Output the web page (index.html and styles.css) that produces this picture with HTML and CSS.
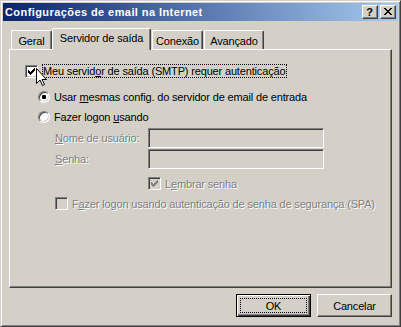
FILE: index.html
```html
<!DOCTYPE html>
<html>
<head>
<meta charset="utf-8">
<link rel="stylesheet" href="styles.css">
</head>
<body>
<div class="window">
  <div class="titlebar">
    <span class="title">Configurações de email na Internet</span>
    <div class="tbtns">
      <div class="tbtn help">?</div>
      <div class="tbtn close">
        <svg width="8" height="7" viewBox="0 0 8 7" shape-rendering="crispEdges"><path d="M0 0h2v1h-2zM6 0h2v1h-2zM1 1h2v1h-2zM5 1h2v1h-2zM2 2h4v1h-4zM3 3h2v1h-2zM2 4h4v1h-4zM1 5h2v1h-2zM5 5h2v1h-2zM0 6h2v1h-2zM6 6h2v1h-2z" fill="#000"/></svg>
      </div>
    </div>
  </div>
  <div class="body">
    <div class="tabs">
      <div class="tab w-geral">Geral</div>
      <div class="tab sel">Servidor de saída</div>
      <div class="tab w-con">Conexão</div>
      <div class="tab w-av">Avançado</div>
    </div>
    <div class="panel">
      <div class="row row-auth">
        <div class="chk">
          <svg width="7" height="7" viewBox="0 0 7 7" shape-rendering="crispEdges"><path d="M6 0h1v1h-1zM5 1h2v1h-2zM0 2h1v1h-1zM4 2h3v1h-3zM0 3h2v1h-2zM3 3h3v1h-3zM0 4h5v1h-5zM1 5h3v1h-3zM2 6h1v1h-1z" fill="#000"/></svg>
        </div>
        <span class="focus">Meu servid<u>o</u>r de saída (SMTP) requer autenticação</span>
      </div>
      <div class="row row-r1">
        <div class="radio on"><i></i></div>
        <span class="rtext">Usar <u>m</u>esmas config. do servidor de email de entrada</span>
      </div>
      <div class="row row-r2">
        <div class="radio"></div>
        <span class="rtext">Fazer logon <u>u</u>sando</span>
      </div>
      <div class="fields">
        <span class="dis"><u>N</u>ome de usuário:</span>
        <div class="field"></div>
        <span class="dis"><u>S</u>enha:</span>
        <div class="field"></div>
      </div>
      <div class="row row-lem">
        <div class="chk off">
          <svg width="7" height="7" viewBox="0 0 7 7" shape-rendering="crispEdges"><path d="M6 0h1v1h-1zM5 1h2v1h-2zM0 2h1v1h-1zM4 2h3v1h-3zM0 3h2v1h-2zM3 3h3v1h-3zM0 4h5v1h-5zM1 5h3v1h-3zM2 6h1v1h-1z" fill="#808080"/></svg>
        </div>
        <span class="dis ctext">L<u>e</u>mbrar senha</span>
      </div>
      <div class="row row-spa">
        <div class="chk off"></div>
        <span class="dis ctext">F<u>a</u>zer logon usando autenticação de senha de segurança (SPA)</span>
      </div>
      <svg class="cursor" width="12" height="19" viewBox="0 0 12 19"><path d="M0.5 0.5V15.5L4 12L6.5 17.5L8.5 16.5L6 11.5H10.5Z" fill="#fff" stroke="#000" stroke-width="1" stroke-linejoin="miter"/></svg>
    </div>
    <div class="buttons">
      <div class="btn default"><span>OK</span></div>
      <div class="btn">Cancelar</div>
    </div>
  </div>
</div>
</body>
</html>
```

FILE: styles.css
```css
html, body {
  margin: 0;
  padding: 0;
  background: #d4d0c8;
}
.window {
  width: 401px;
  height: 327px;
  box-sizing: border-box;
  background: #d4d0c8;
  border: 1px solid;
  border-color: #d4d0c8 #404040 #404040 #d4d0c8;
  box-shadow: inset 1px 1px #fff, inset -1px -1px #808080;
  padding: 2px;
  display: flex;
  flex-direction: column;
  font-family: "Liberation Sans", Arial, sans-serif;
  font-size: 11px;
  color: #000;
  letter-spacing: -0.16px;
}
.titlebar {
  height: 18px;
  flex: none;
  display: flex;
  align-items: center;
  padding-left: 2px;
  background: linear-gradient(to right, #0a246a, #a6caf0);
}
.title {
  color: #fff;
  font-weight: bold;
  letter-spacing: 0.42px;
  line-height: 13px;
}
.tbtns {
  margin-left: auto;
  margin-right: 2px;
  display: flex;
  gap: 2px;
}
.tbtn {
  width: 16px;
  height: 14px;
  box-sizing: border-box;
  background: #d4d0c8;
  border: 1px solid;
  border-color: #fff #404040 #404040 #fff;
  box-shadow: inset -1px -1px #808080;
  display: flex;
  align-items: center;
  justify-content: center;
}
.help {
  font-weight: bold;
  font-size: 11px;
  line-height: 11px;
  letter-spacing: 0;
  padding-right: 1px;
}
.close svg {
  display: block;
  margin-right: 1px;
  margin-top: -1px;
}
.body {
  flex: 1;
  display: flex;
  flex-direction: column;
  padding: 7px 6px 0 6px;
}
.tabs {
  display: flex;
  align-items: flex-end;
  height: 21px;
  padding-left: 2px;
}
.tab {
  box-sizing: border-box;
  height: 19px;
  border-top: 1px solid #fff;
  border-left: 1px solid #fff;
  border-right: 1px solid #404040;
  box-shadow: inset -1px 0 #808080;
  border-radius: 2px 2px 0 0;
  display: flex;
  align-items: center;
  justify-content: center;
  padding-top: 1px;
  background: #d4d0c8;
}
.w-geral { width: 41px; }
.w-con { width: 51px; margin-left: 1px; }
.w-av { width: 60px; margin-left: 1px; }
.tab.sel {
  width: 99px;
  height: 22px;
  margin-bottom: -1px;
  position: relative;
  z-index: 1;
  padding-top: 0;
  padding-bottom: 3px;
}
.panel {
  position: relative;
  height: 239px;
  box-sizing: border-box;
  border: 1px solid;
  border-color: #fff #404040 #404040 #fff;
  box-shadow: inset -1px -1px #808080;
  padding-top: 14px;
}
.row {
  display: flex;
  align-items: center;
}
.row-auth {
  height: 14px;
  margin-left: 15px;
}
.chk {
  width: 13px;
  height: 13px;
  box-sizing: border-box;
  flex: none;
  background: #fff;
  border: 1px solid;
  border-color: #808080 #fff #fff #808080;
  box-shadow: inset 1px 1px #404040, inset -1px -1px #d4d0c8;
  display: flex;
  align-items: center;
  justify-content: center;
}
.chk svg { display: block; }
.chk.off { background: #d4d0c8; }
.row-auth .chk { margin-top: 1px; }
.focus {
  margin-left: 4px;
  height: 14px;
  box-sizing: border-box;
  border: 1px dotted #000;
  line-height: 12px;
  padding-right: 1px;
}
.row-r1 {
  height: 16px;
  margin-top: 11px;
  margin-left: 28px;
}
.row-r2 {
  height: 16px;
  margin-top: 4px;
  margin-left: 28px;
}
.radio {
  width: 12px;
  height: 12px;
  box-sizing: border-box;
  flex: none;
  border-radius: 50%;
  background: #fff;
  border: 1px solid;
  border-color: #808080 #fff #fff #808080;
  box-shadow: inset 1px 1px #404040, inset -1px -1px #d4d0c8;
  display: flex;
  align-items: center;
  justify-content: center;
}
.radio i {
  width: 4px;
  height: 4px;
  border-radius: 1px;
  background: #000;
}
.rtext {
  margin-left: 4px;
}
.fields {
  margin-top: 3px;
  margin-left: 45px;
  display: grid;
  grid-template-columns: 93px 176px;
  grid-auto-rows: 20px;
  row-gap: 1px;
  align-items: center;
}
.dis {
  color: #808080;
  text-shadow: 1px 1px #fff;
}
.field {
  height: 20px;
  box-sizing: border-box;
  border: 1px solid;
  border-color: #808080 #fff #fff #808080;
  box-shadow: inset 1px 1px #404040, inset -1px -1px #d4d0c8;
  background: #d4d0c8;
}
.row-lem {
  height: 13px;
  margin-top: 8px;
  margin-left: 138px;
}
.row-spa {
  height: 13px;
  margin-top: 7px;
  margin-left: 45px;
}
.ctext {
  margin-left: 4px;
}
.cursor {
  position: absolute;
  left: 26px;
  top: 18px;
}
.buttons {
  display: flex;
  justify-content: flex-end;
  gap: 6px;
  margin-top: 6px;
}
.btn {
  width: 75px;
  height: 23px;
  box-sizing: border-box;
  border: 1px solid;
  border-color: #fff #404040 #404040 #fff;
  box-shadow: inset -1px -1px #808080;
  display: flex;
  align-items: center;
  justify-content: center;
  background: #d4d0c8;
}
.btn.default {
  border: 1px solid #000;
  box-shadow: inset 1px 1px #fff, inset -1px -1px #404040, inset -2px -2px #808080;
  outline: 1px dotted #000;
  outline-offset: -5px;
}
```
